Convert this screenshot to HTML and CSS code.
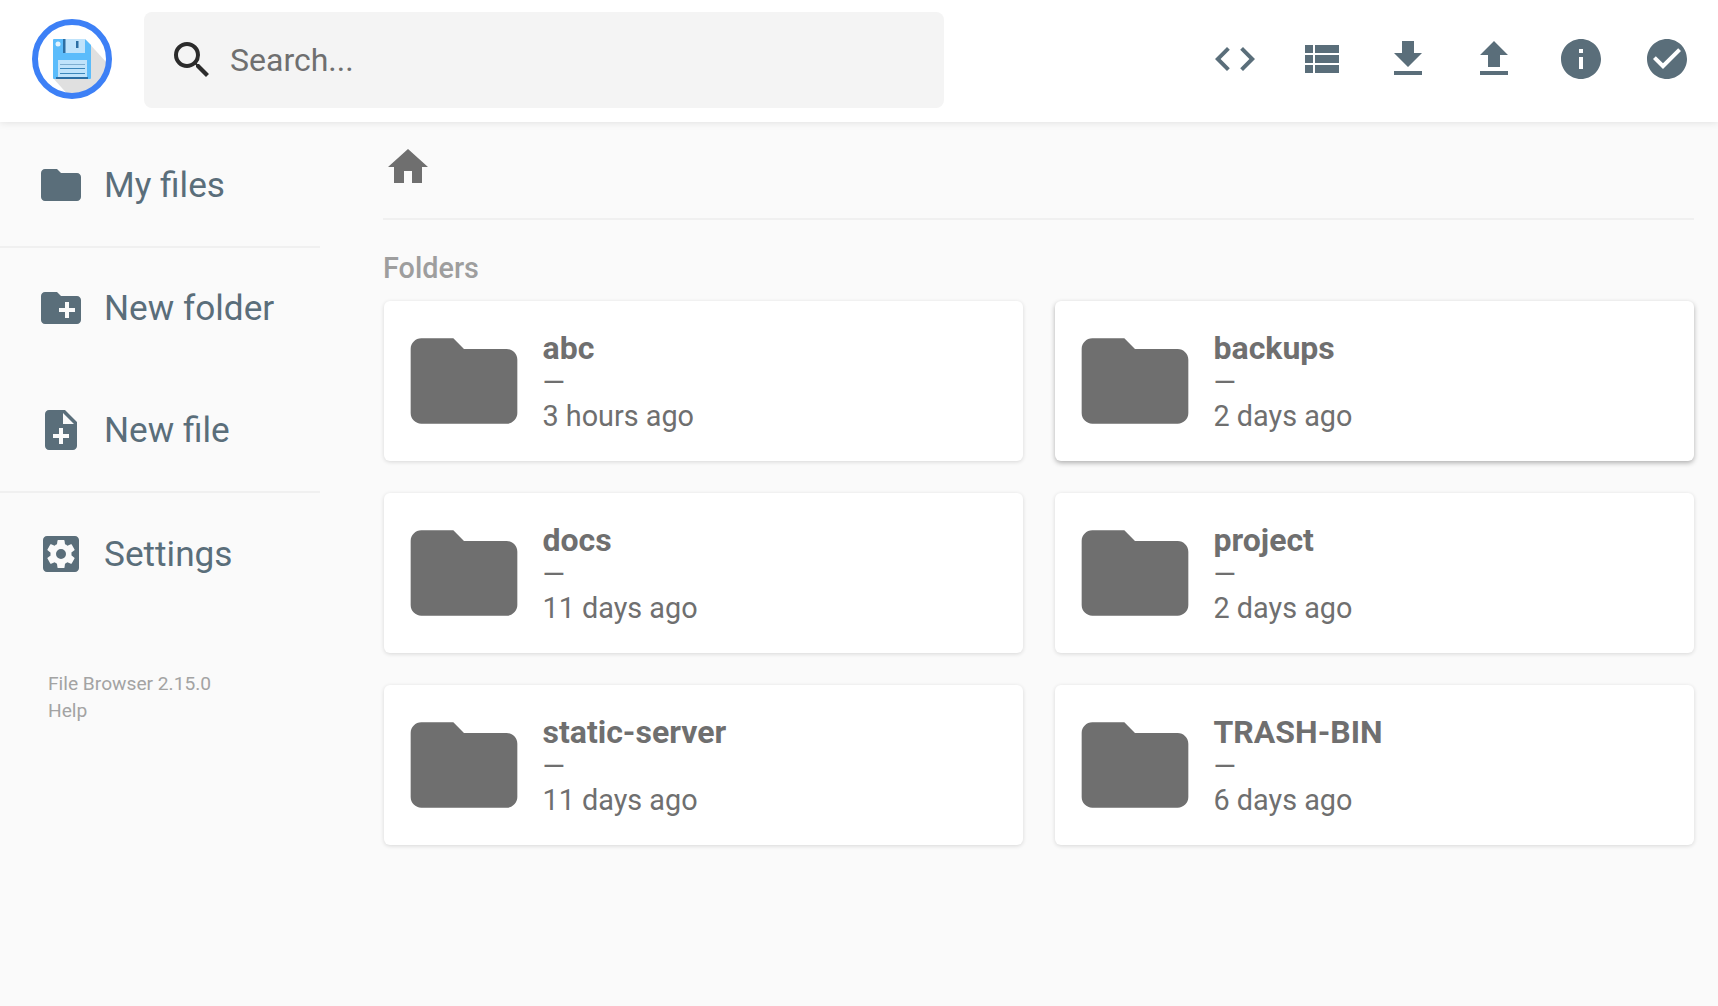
FILE: index.html
```html
<!DOCTYPE html>
<html>
    <head>
        <meta charset="utf-8">
        <title>File Browser</title>
        <link rel="stylesheet" href="styles.css">
    </head>
    <body>
        <header class="topbar">
            <svg class="logo" viewBox="0 0 80 80">
                <circle cx="40" cy="40" r="37" fill="#fff"/>
                <path d="M54 21 L75 44 A37 37 0 0 1 38 78 L21 59 Z" fill="#e0e0e0"/>
                <path d="M21 21 a1 1 0 0 1 1-1 H53 L59 26 V59 a1 1 0 0 1-1 1 H22 a1 1 0 0 1-1-1 Z" fill="#5bbcfb"/>
                <rect x="31" y="20" width="22" height="14" fill="#bfe3fb"/>
                <rect x="31" y="20" width="2.500" height="14" fill="#2c6ea3"/>
                <rect x="44" y="22" width="2.500" height="7" fill="#2c6ea3"/>
                <circle cx="26" cy="25" r="2.500" fill="#e3f4fe"/>
                <rect x="26" y="41" width="29" height="17" fill="#bfe3fb"/>
                <rect x="28" y="45" width="25" height="1" fill="#7eaed0"/>
                <rect x="28" y="49" width="25" height="1" fill="#3c87bb"/>
                <rect x="28" y="54" width="25" height="1" fill="#3c87bb"/>
                <rect x="24" y="58" width="32" height="2" fill="#2c6ea3"/>
                <circle cx="40" cy="40" r="37" fill="none" stroke="#3d80f6" stroke-width="6"/>
            </svg>
            <div class="search">
                <svg class="search-icon" viewBox="0 0 24 24"><path d="M15.5 14h-.79l-.28-.27A6.47 6.47 0 0 0 16 9.5 6.5 6.5 0 1 0 9.5 16c1.61 0 3.09-.59 4.23-1.57l.27.28v.79l5 4.99L20.49 19l-4.99-5zm-6 0C7.01 14 5 11.99 5 9.5S7.01 5 9.5 5 14 7.01 14 9.5 11.99 14 9.5 14z"/></svg>
                <span class="search-text">Search...</span>
            </div>
            <nav class="actions">
                <svg viewBox="0 0 24 24"><path d="M9.4 16.6 4.8 12l4.6-4.6L8 6l-6 6 6 6 1.4-1.4zm5.2 0 4.6-4.6-4.6-4.6L16 6l6 6-6 6-1.4-1.4z"/></svg>
                <svg viewBox="0 0 24 24"><path d="M4 14h4v-4H4v4zm0 5h4v-4H4v4zM4 9h4V5H4v4zm5 5h12v-4H9v4zm0 5h12v-4H9v4zM9 5v4h12V5H9z"/></svg>
                <svg viewBox="0 0 24 24"><path d="M19 9h-4V3H9v6H5l7 7 7-7zM5 18v2h14v-2H5z"/></svg>
                <svg viewBox="0 0 24 24"><path d="M9 16h6v-6h4l-7-7-7 7h4v6zm-4 2h14v2H5v-2z"/></svg>
                <svg viewBox="0 0 24 24"><path d="M12 2C6.48 2 2 6.48 2 12s4.48 10 10 10 10-4.48 10-10S17.52 2 12 2zm1 15h-2v-6h2v6zm0-8h-2V7h2v2z"/></svg>
                <svg viewBox="0 0 24 24"><path d="M12 2C6.48 2 2 6.48 2 12s4.48 10 10 10 10-4.48 10-10S17.52 2 12 2zm-2 15-5-5 1.41-1.41L10 14.17l7.59-7.59L19 8l-9 9z"/></svg>
            </nav>
        </header>

        <div class="page">
            <aside class="sidebar">
                <a class="side-item">
                    <svg viewBox="0 0 24 24"><path d="M10 4H4c-1.100 0-2 .9-2 2v12c0 1.100.9 2 2 2h16c1.100 0 2-.9 2-2V8c0-1.100-.9-2-2-2h-8l-2-2z"/></svg>
                    My files
                </a>
                <div class="side-group">
                    <a class="side-item">
                        <svg viewBox="0 0 24 24"><path d="M20 6h-8l-2-2H4c-1.110 0-2 .89-2 2v12c0 1.110.89 2 2 2h16c1.110 0 2-.89 2-2V8c0-1.110-.89-2-2-2zm-1 8h-3v3h-2v-3h-3v-2h3V9h2v3h3v2z"/></svg>
                        New folder
                    </a>
                    <a class="side-item">
                        <svg viewBox="0 0 24 24"><path d="M14 2H6c-1.100 0-2 .9-2 2v16c0 1.100.9 2 2 2h12c1.100 0 2-.9 2-2V8l-6-6zm2 14h-3v3h-2v-3H8v-2h3v-3h2v3h3v2zm-3-7V3.500L18.500 9H13z"/></svg>
                        New file
                    </a>
                </div>
                <a class="side-item">
                    <svg viewBox="0 0 24 24"><path d="M19 3H5c-1.110 0-2 .9-2 2v14c0 1.100.89 2 2 2h14c1.110 0 2-.9 2-2V5c0-1.100-.89-2-2-2zm-1.750 9c0 .23-.02.460-.05.680l1.480 1.160c.130.110.170.300.080.450l-1.400 2.420c-.090.150-.270.210-.430.150l-1.740-.7c-.360.280-.760.510-1.180.690l-.260 1.850c-.030.170-.180.300-.350.300h-2.800c-.170 0-.320-.130-.350-.290l-.260-1.850c-.430-.180-.820-.410-1.180-.690l-1.740.7c-.160.060-.340 0-.430-.150l-1.400-2.420c-.090-.150-.050-.340.080-.450l1.480-1.160c-.030-.230-.050-.460-.050-.690 0-.230.020-.460.050-.680l-1.480-1.160c-.130-.110-.170-.300-.080-.450l1.400-2.420c.090-.150.270-.210.430-.150l1.740.7c.360-.280.760-.510 1.180-.690l.260-1.850c.030-.170.180-.300.350-.300h2.800c.170 0 .320.130.350.290l.260 1.850c.430.180.820.410 1.180.690l1.740-.7c.160-.060.340 0 .430.150l1.400 2.420c.090.150.050.340-.080.450l-1.480 1.160c.030.230.050.460.050.690z M12 9.500a2.500 2.500 0 1 0 0 5 2.500 2.500 0 0 0 0-5z"/></svg>
                    Settings
                </a>
                <p class="credits">File Browser 2.15.0<br>Help</p>
            </aside>

            <main class="content">
                <div class="breadcrumbs">
                    <svg viewBox="0 0 24 24"><path d="M10 20v-6h4v6h5v-8h3L12 3 2 12h3v8z"/></svg>
                </div>
                <h2 class="section-title">Folders</h2>
                <div class="grid">
                    <div class="card">
                        <svg class="folder" viewBox="0 0 24 24"><path d="M10 4H4c-1.100 0-2 .9-2 2v12c0 1.100.9 2 2 2h16c1.100 0 2-.9 2-2V8c0-1.100-.9-2-2-2h-8l-2-2z"/></svg>
                        <div class="card-info"><h3>abc</h3><p>—</p><p>3 hours ago</p></div>
                    </div>
                    <div class="card card-hover">
                        <svg class="folder" viewBox="0 0 24 24"><path d="M10 4H4c-1.100 0-2 .9-2 2v12c0 1.100.9 2 2 2h16c1.100 0 2-.9 2-2V8c0-1.100-.9-2-2-2h-8l-2-2z"/></svg>
                        <div class="card-info"><h3>backups</h3><p>—</p><p>2 days ago</p></div>
                    </div>
                    <div class="card">
                        <svg class="folder" viewBox="0 0 24 24"><path d="M10 4H4c-1.100 0-2 .9-2 2v12c0 1.100.9 2 2 2h16c1.100 0 2-.9 2-2V8c0-1.100-.9-2-2-2h-8l-2-2z"/></svg>
                        <div class="card-info"><h3>docs</h3><p>—</p><p>11 days ago</p></div>
                    </div>
                    <div class="card">
                        <svg class="folder" viewBox="0 0 24 24"><path d="M10 4H4c-1.100 0-2 .9-2 2v12c0 1.100.9 2 2 2h16c1.100 0 2-.9 2-2V8c0-1.100-.9-2-2-2h-8l-2-2z"/></svg>
                        <div class="card-info"><h3>project</h3><p>—</p><p>2 days ago</p></div>
                    </div>
                    <div class="card">
                        <svg class="folder" viewBox="0 0 24 24"><path d="M10 4H4c-1.100 0-2 .9-2 2v12c0 1.100.9 2 2 2h16c1.100 0 2-.9 2-2V8c0-1.100-.9-2-2-2h-8l-2-2z"/></svg>
                        <div class="card-info"><h3>static-server</h3><p>—</p><p>11 days ago</p></div>
                    </div>
                    <div class="card">
                        <svg class="folder" viewBox="0 0 24 24"><path d="M10 4H4c-1.100 0-2 .9-2 2v12c0 1.100.9 2 2 2h16c1.100 0 2-.9 2-2V8c0-1.100-.9-2-2-2h-8l-2-2z"/></svg>
                        <div class="card-info"><h3>TRASH-BIN</h3><p>—</p><p>6 days ago</p></div>
                    </div>
                </div>
            </main>
        </div>
    </body>
</html>
```

FILE: styles.css
```css
* { box-sizing: border-box; }

html, body {
    height: 100%;
    margin: 0;
}

body {
    background: #fafafa;
    color: #6f6f6f;
    font-family: Roboto, "Liberation Sans", sans-serif;
    overflow: hidden;
}

/* top bar */
.topbar {
    align-items: center;
    background: #fff;
    box-shadow: 0 0 8px rgba(0, 0, 0, 0.12);
    display: flex;
    height: 122px;
    padding: 0 27px 2px 32px;
    position: relative;
}

.logo {
    flex: none;
    height: 80px;
    margin-bottom: 2px;
    width: 80px;
}

.search {
    align-items: center;
    background: #f4f4f4;
    border-radius: 8px;
    display: flex;
    height: 96px;
    margin-left: 32px;
    padding-left: 24px;
    width: 800px;
}

.search-icon {
    fill: #2b2b2b;
    height: 48px;
    width: 48px;
}

.search-text {
    color: #6f6f6f;
    font-size: 32px;
    margin-left: 14px;
}

.actions {
    display: flex;
    gap: 38.4px;
    margin-bottom: 2px;
    margin-left: auto;
}

.actions svg {
    fill: #5a6e7a;
    height: 48px;
    width: 48px;
}

/* sidebar */
.page {
    display: flex;
}

.sidebar {
    flex: none;
    padding-top: 2px;
    width: 320px;
}

.side-group {
    border-bottom: 2px solid #f0f0f0;
    border-top: 2px solid #f0f0f0;
    height: 247px;
}

.side-item {
    align-items: center;
    color: #5a6e7a;
    display: flex;
    font-size: 35.2px;
    gap: 19px;
    height: 122px;
    padding-left: 37px;
}

.side-group .side-item {
    height: 122.5px;
}

.side-group .side-item:first-child {
    margin-top: -1.5px;
}

.side-item svg {
    fill: #5a6e7a;
    flex: none;
    height: 48px;
    width: 48px;
}

.credits {
    color: #a3a3a3;
    font-size: 19.2px;
    line-height: 27px;
    margin: 55px 0 0 48px;
}

/* listing */
.content {
    flex: 1;
    min-width: 0;
    padding-right: 24px;
}

.breadcrumbs {
    border-bottom: 2px solid #f0f0f0;
    height: 98px;
    margin-left: 63px;
    padding-top: 21px;
}

.breadcrumbs svg {
    display: block;
    fill: #6f6f6f;
    height: 48px;
    margin-left: 1px;
    width: 48px;
}

.section-title {
    color: #9e9e9e;
    font-size: 28.8px;
    font-weight: 500;
    line-height: 32px;
    margin: 32px 0 17px 63px;
}

.grid {
    display: grid;
    gap: 32px;
    grid-template-columns: 1fr 1fr;
    margin-left: 64px;
}

.card {
    align-items: center;
    background: #fff;
    border-radius: 6px;
    box-shadow: 0 1px 4px rgba(0, 0, 0, 0.14);
    display: flex;
    height: 160px;
}

.card-hover {
    box-shadow: 0 2px 5px rgba(0, 0, 0, 0.3);
}

.folder {
    fill: #6f6f6f;
    flex: none;
    height: 128px;
    margin-left: 16px;
    width: 128px;
}

.card-info {
    margin-left: 14.5px;
    padding-top: 2px;
}

.card-info h3 {
    font-size: 32px;
    font-weight: 700;
    line-height: 34px;
    margin: 0;
}

.card-info p {
    font-size: 28.8px;
    line-height: 34px;
    margin: 0;
}
```
